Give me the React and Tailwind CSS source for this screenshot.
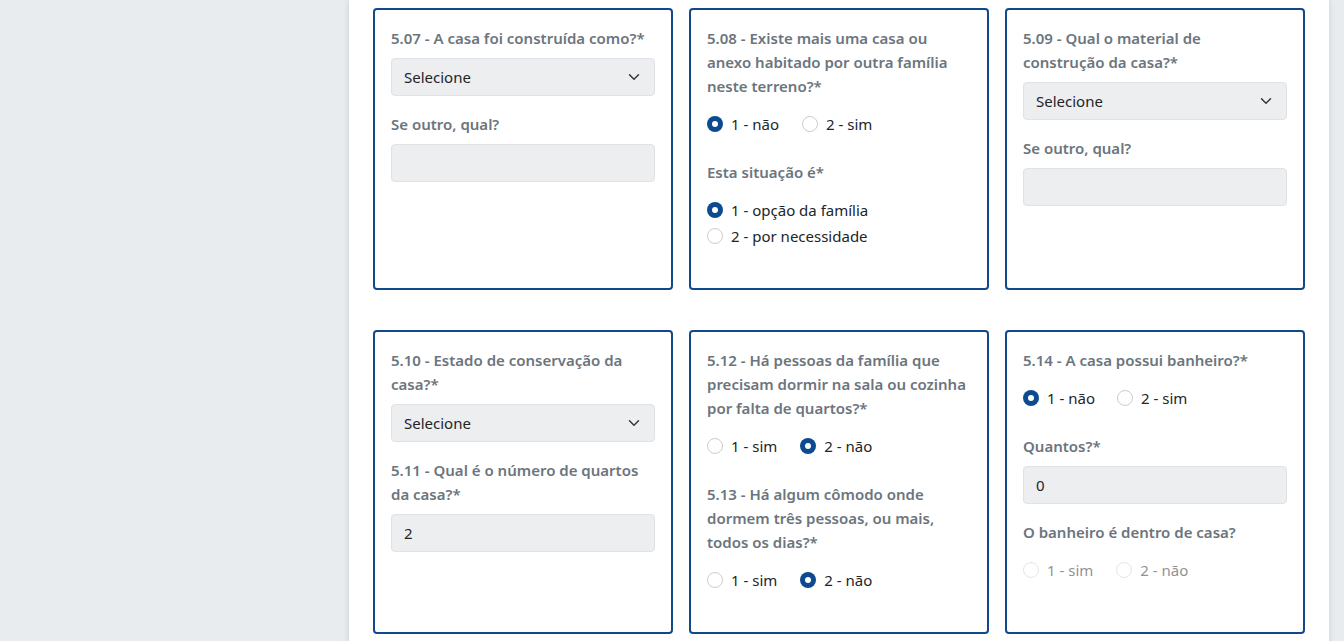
import React from "react";

const font = { fontFamily: '"Noto Sans", "Open Sans", sans-serif' };

function Label({ children }) {
  return (
    <div className="text-[15px] leading-6 font-semibold text-[#6c757d] whitespace-pre-line">
      {children}
    </div>
  );
}

function Select() {
  return (
    <div className="mt-2 h-[38px] rounded-[4px] border border-[#dee2e6] bg-[#eceef0] flex items-center justify-between pl-3 pr-3 text-[15px] text-[#212529]">
      <span>Selecione</span>
      <svg width="16" height="12" viewBox="0 0 16 16" fill="none" stroke="#343a40" strokeWidth="2" strokeLinecap="round" strokeLinejoin="round">
        <path d="M2 5l6 6 6-6" />
      </svg>
    </div>
  );
}

function Input({ value }) {
  return (
    <div className="mt-2 h-[38px] rounded-[4px] border border-[#dee2e6] bg-[#eceef0] flex items-center pl-3 text-[15px] text-[#212529]">
      {value}
    </div>
  );
}

function Radio({ checked, disabled, label }) {
  return (
    <div className={`flex items-center h-6 ${disabled ? "opacity-50" : ""}`}>
      {checked ? (
        <span className="w-4 h-4 rounded-full bg-[#0d4a8f] flex items-center justify-center">
          <span className="w-[6px] h-[6px] rounded-full bg-white" />
        </span>
      ) : (
        <span className="w-4 h-4 rounded-full border border-[#c9cdd1] bg-white" />
      )}
      <span className="ml-2 text-[15px] text-[#212529]">{label}</span>
    </div>
  );
}

function Card({ children }) {
  return (
    <div className="border-2 border-[#114a8b] rounded-[4px] px-4 pt-4 pb-[40px] bg-white">
      {children}
    </div>
  );
}

export default function App() {
  return (
    <div className="min-h-screen bg-[#e9ecef] flex" style={font}>
      <div className="w-[349px] shrink-0" />
      <div className="w-[980px] shrink-0 bg-white px-6 pt-2 pb-8 shadow-[0_0_6px_rgba(0,0,0,0.12)]">
        <div className="grid grid-cols-3 gap-4">
          <Card>
            <Label>5.07 - A casa foi construída como?*</Label>
            <Select />
            <div className="mt-4">
              <Label>Se outro, qual?</Label>
            </div>
            <Input value="" />
          </Card>
          <Card>
            <Label>{"5.08 - Existe mais uma casa ou\nanexo habitado por outra família\nneste terreno?*"}</Label>
            <div className="mt-[14px] flex gap-[23px]">
              <Radio checked label="1 - não" />
              <Radio label="2 - sim" />
            </div>
            <div className="mt-6">
              <Label>Esta situação é*</Label>
            </div>
            <div className="mt-[14px] flex flex-col gap-[2px]">
              <Radio checked label="1 - opção da família" />
              <Radio label="2 - por necessidade" />
            </div>
          </Card>
          <Card>
            <Label>{"5.09 - Qual o material de\nconstrução da casa?*"}</Label>
            <Select />
            <div className="mt-4">
              <Label>Se outro, qual?</Label>
            </div>
            <Input value="" />
          </Card>
        </div>

        <div className="grid grid-cols-3 gap-4 mt-[40px]">
          <Card>
            <Label>{"5.10 - Estado de conservação da\ncasa?*"}</Label>
            <Select />
            <div className="mt-4">
              <Label>{"5.11 - Qual é o número de quartos\nda casa?*"}</Label>
            </div>
            <Input value="2" />
          </Card>
          <Card>
            <Label>{"5.12 - Há pessoas da família que\nprecisam dormir na sala ou cozinha\npor falta de quartos?*"}</Label>
            <div className="mt-[14px] flex gap-[23px]">
              <Radio label="1 - sim" />
              <Radio checked label="2 - não" />
            </div>
            <div className="mt-6">
              <Label>{"5.13 - Há algum cômodo onde\ndormem três pessoas, ou mais,\ntodos os dias?*"}</Label>
            </div>
            <div className="mt-[14px] flex gap-[23px]">
              <Radio label="1 - sim" />
              <Radio checked label="2 - não" />
            </div>
          </Card>
          <Card>
            <Label>5.14 - A casa possui banheiro?*</Label>
            <div className="mt-[14px] flex gap-[22px]">
              <Radio checked label="1 - não" />
              <Radio label="2 - sim" />
            </div>
            <div className="mt-6">
              <Label>Quantos?*</Label>
            </div>
            <Input value="0" />
            <div className="mt-4">
              <Label>O banheiro é dentro de casa?</Label>
            </div>
            <div className="mt-[14px] flex gap-[23px]">
              <Radio disabled label="1 - sim" />
              <Radio disabled label="2 - não" />
            </div>
          </Card>
        </div>
      </div>
    </div>
  );
}
